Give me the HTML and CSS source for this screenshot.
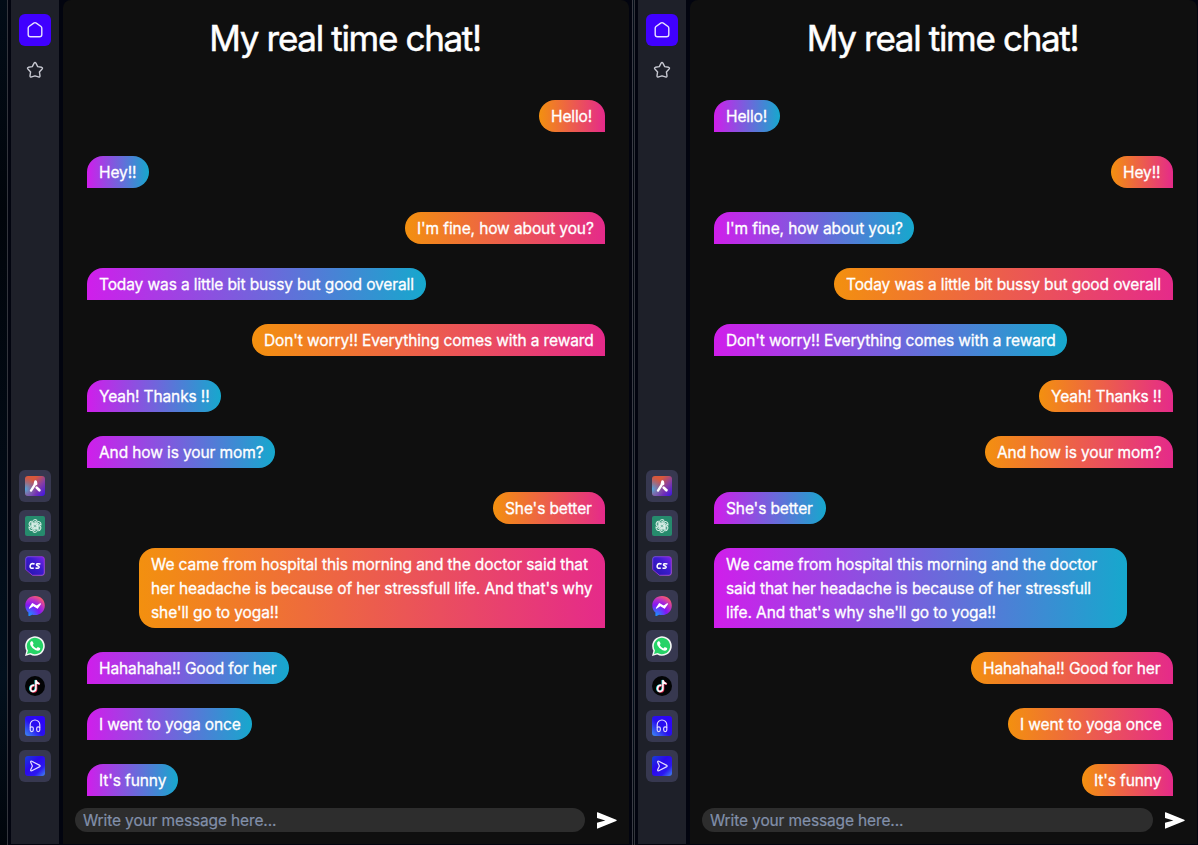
FILE: index.html
```html
<!DOCTYPE html>
<html lang="en">
<head>
<meta charset="utf-8">
<title>My real time chat!</title>
<link rel="stylesheet" href="styles.css">
</head>
<body>
<svg class="defs" width="0" height="0" aria-hidden="true">
  <defs>
    <linearGradient id="ariaBase" x1="0" y1="0" x2="1" y2="1"><stop offset="0" stop-color="#d8583c"/><stop offset=".3" stop-color="#d8583c"/><stop offset=".6" stop-color="#8a40a0"/><stop offset="1" stop-color="#3a12e8"/></linearGradient>
    <radialGradient id="ariaBlue" cx="0" cy=".65" r=".6"><stop offset="0" stop-color="#4fa8e0"/><stop offset="1" stop-color="#5b70c8" stop-opacity="0"/></radialGradient>
    <linearGradient id="csFill" x1="0" y1="1" x2="1" y2="0"><stop offset="0" stop-color="#2416a8"/><stop offset=".6" stop-color="#3d1bd0"/><stop offset="1" stop-color="#7b25e8"/></linearGradient>
    <linearGradient id="csEdge" x1="0" y1="0" x2="1" y2="1"><stop offset="0" stop-color="#7a55f5"/><stop offset=".5" stop-color="#a32de8"/><stop offset="1" stop-color="#c060e0"/></linearGradient>
    <radialGradient id="msg" cx=".2" cy="1" r="1.1"><stop offset="0" stop-color="#149bff"/><stop offset=".5" stop-color="#8316f5"/><stop offset=".72" stop-color="#b12bd0"/><stop offset="1" stop-color="#ff5c68"/></radialGradient>
    <linearGradient id="musicFill" x1="0" y1="1" x2="1" y2="0"><stop offset="0" stop-color="#3e8df0"/><stop offset=".45" stop-color="#2810ee"/><stop offset="1" stop-color="#3000ff"/></linearGradient>
    <linearGradient id="playFill" x1="0" y1="0" x2="1" y2="1"><stop offset="0" stop-color="#1740d8"/><stop offset=".4" stop-color="#2b08ed"/><stop offset=".72" stop-color="#2b18ef"/><stop offset="1" stop-color="#438af0"/></linearGradient>
  </defs>
  <symbol id="home" viewBox="0 0 20 20"><path d="M3.2 8.3Q3.2 7.2 4 6.5L8.7 3.1Q10 2.2 11.3 3.1L16 6.5Q16.8 7.2 16.8 8.3V14.5Q16.8 16.8 14.5 16.8H5.5Q3.2 16.8 3.2 14.5Z" fill="none" stroke="#e8e2ff" stroke-width="1.4"/></symbol>
  <symbol id="star" viewBox="0 0 20 20"><path d="M9.1 3.2Q10 1.8 10.9 3.2L12.7 6.6L16.6 7.3Q18.1 7.8 17.1 9L14.4 11.9L15 15.9Q14.9 17.6 13.4 16.9L10 15.8L6.6 16.9Q5.1 17.6 5 15.9L5.6 11.9L2.9 9Q1.9 7.8 3.4 7.3L7.3 6.6Z" fill="none" stroke="#c6c7d0" stroke-width="1.4" stroke-linejoin="round"/></symbol>
  <symbol id="aria" viewBox="0 0 20 20"><rect width="20" height="20" rx="3" fill="url(#ariaBase)"/><rect width="20" height="20" rx="3" fill="url(#ariaBlue)"/><path d="M10.4 5.5L9.5 9.2L6 14.6M10.9 5.8L11.2 8" fill="none" stroke="#fff" stroke-width="2.4" stroke-linecap="round"/><path d="M11.7 11.6L14.4 14.3" stroke="#fff" stroke-width="2.7" stroke-linecap="round"/></symbol>
  <symbol id="gpt" viewBox="0 0 20 20"><rect width="20" height="20" rx="2" fill="#268b6d"/><g fill="none" stroke="#d8eee7" stroke-width="1"><path id="petal" d="M7.5 11.4V6.2Q7.6 3.7 10 3.6Q11.4 3.6 12.2 4.4L8.7 6.4V10.8"/><use href="#petal" transform="rotate(60 10 10)"/><use href="#petal" transform="rotate(120 10 10)"/><use href="#petal" transform="rotate(180 10 10)"/><use href="#petal" transform="rotate(240 10 10)"/><use href="#petal" transform="rotate(300 10 10)"/></g></symbol>
  <symbol id="cs" viewBox="0 0 20 20"><path d="M3 .7H17Q19.3.7 19.3 3V17Q19.3 19.3 17 19.3H7.5L.7 13.5V3Q.7.7 3 .7Z" fill="url(#csFill)" stroke="url(#csEdge)" stroke-width=".8"/><path d="M9.6 8.1Q6 6.6 5.2 9.6Q4.5 12.9 8.7 12.1M15.4 8Q11.5 7.2 11.5 8.8C11.5 10 14.4 9.6 14.1 11.2Q13.6 12.7 10.5 12" fill="none" stroke="#fff" stroke-width="1.6"/></symbol>
  <symbol id="messenger" viewBox="0 0 20 20"><path d="M10 0C4.2 0 .3 4.2.3 9.5C.3 12.5 1.5 15 3.4 16.5V19.4Q3.6 20.2 4.4 19.9L7.2 18.8Q8.5 19.1 10 19.1C15.8 19.1 19.8 14.9 19.8 9.5S15.8 0 10 0Z" fill="url(#msg)"/><path d="M4.5 12.1L7.5 7.7L11.7 10.3L15.4 7.8L12.4 12.1L8.3 9.6Z" fill="#fff" stroke="#fff" stroke-width="1.2" stroke-linejoin="round"/></symbol>
  <symbol id="whatsapp" viewBox="0 0 20 20"><path d="M0 20L1.4 14.8A9.8 9.8 0 1 1 5.2 18.6Z" fill="#f4f5f5"/><path d="M2 18L3 14.4A8.2 8.2 0 1 1 5.6 17Z" fill="#25d366"/><path d="M6.2 5.3Q7.4 4.8 7.8 5.8L8.5 7.4Q8.7 8 7.7 9Q8.9 11.5 11.4 12.4L12.4 11.3Q12.8 11 13.3 11.3L15 12.1Q15.5 12.5 14.9 13.7Q13.6 15.4 10.7 14.2Q7 12.7 5.3 9Q4.4 6.6 6.2 5.3Z" fill="#fff"/></symbol>
  <symbol id="tiktok" viewBox="0 0 20 20"><circle cx="10" cy="10" r="10" fill="#030405"/><g fill="none" stroke-width="1.9"><path d="M9 9.1C3.8 8.8 3.9 15.5 7.7 15.2Q10.4 15 10.4 12.4V4Q10.8 7 14 7.5" stroke="#35dfe0"/><path d="M9.9 9.6C4.9 9.2 5 16 8.7 15.8Q11.4 15.7 11.4 12.9V4.6Q11.8 7.4 15 8.2" stroke="#ed2c55"/><path d="M9.4 9.3C4.4 9 4.5 15.6 8.2 15.4Q10.9 15.2 10.9 12.6V4.2Q11.3 7.2 14.5 7.8" stroke="#fff" stroke-width="1.5"/></g></symbol>
  <symbol id="music" viewBox="0 0 20 20"><rect width="20" height="20" rx="3" fill="url(#musicFill)"/><g fill="none" stroke="#e4dcff" stroke-width="1.15"><path d="M5.2 12V8.8A4.8 4.8 0 0 1 14.8 8.8V12"/><rect x="5.2" y="10.8" width="3.1" height="4.8" rx="1.5"/><rect x="11.7" y="10.8" width="3.1" height="4.8" rx="1.5"/></g></symbol>
  <symbol id="player" viewBox="0 0 20 20"><rect width="20" height="20" rx="3" fill="url(#playFill)"/><path d="M5.6 6.1Q5.6 4.9 6.8 5.3L14.8 9.4Q15.7 10 14.8 10.6L6.8 14.7Q5.6 15.1 5.6 13.9L7.4 10Z" fill="none" stroke="#e4dcff" stroke-width="1.2" stroke-linejoin="round"/></symbol>
  <symbol id="send" viewBox="0 0 20 17"><path d="M0 .7Q0 0 .7.2L19.2 7.8Q20.2 8.4 19.2 9L.7 16.6Q0 16.8 0 16.1V10.7L8.4 8.4L0 6.1Z" fill="#fff"/></symbol>
</svg>
<main class="desktop">
  <section class="window window-first">
    <nav class="sidebar">
      <span class="tab active"><svg><use href="#home"/></svg></span>
      <span class="tab"><svg><use href="#star"/></svg></span>
      <div class="apps">
        <span class="tab app"><svg><use href="#aria"/></svg></span>
        <span class="tab app"><svg><use href="#gpt"/></svg></span>
        <span class="tab app"><svg><use href="#cs"/></svg></span>
        <span class="tab app"><svg><use href="#messenger"/></svg></span>
        <span class="tab app"><svg><use href="#whatsapp"/></svg></span>
        <span class="tab app"><svg><use href="#tiktok"/></svg></span>
        <span class="tab app"><svg><use href="#music"/></svg></span>
        <span class="tab app"><svg><use href="#player"/></svg></span>
      </div>
    </nav>
    <div class="page">
      <h1>My real time chat!</h1>
      <ul class="messages">
        <li class="mine m-hello">Hello!</li>
        <li class="m-hey">Hey!!</li>
        <li class="mine m-fine">I'm fine, how about you?</li>
        <li class="m-today">Today was a little bit bussy but good overall</li>
        <li class="mine m-worry">Don't worry!! Everything comes with a reward</li>
        <li class="m-thanks">Yeah! Thanks !!</li>
        <li class="m-mom">And how is your mom?</li>
        <li class="mine m-better">She's better</li>
        <li class="mine m-long">We came from hospital this morning and the doctor said that<br>her headache is because of her stressfull life. And that's why<br>she'll go to yoga!!</li>
        <li class="m-haha">Hahahaha!! Good for her</li>
        <li class="m-yoga">I went to yoga once</li>
        <li class="m-funny">It's funny</li>
      </ul>
      <form class="composer"><input placeholder="Write your message here..."><svg class="send"><use href="#send"/></svg></form>
    </div>
  </section>
  <section class="window window-second">
    <nav class="sidebar">
      <span class="tab active"><svg><use href="#home"/></svg></span>
      <span class="tab"><svg><use href="#star"/></svg></span>
      <div class="apps">
        <span class="tab app"><svg><use href="#aria"/></svg></span>
        <span class="tab app"><svg><use href="#gpt"/></svg></span>
        <span class="tab app"><svg><use href="#cs"/></svg></span>
        <span class="tab app"><svg><use href="#messenger"/></svg></span>
        <span class="tab app"><svg><use href="#whatsapp"/></svg></span>
        <span class="tab app"><svg><use href="#tiktok"/></svg></span>
        <span class="tab app"><svg><use href="#music"/></svg></span>
        <span class="tab app"><svg><use href="#player"/></svg></span>
      </div>
    </nav>
    <div class="page">
      <h1>My real time chat!</h1>
      <ul class="messages">
        <li class="m-hello">Hello!</li>
        <li class="mine m-hey">Hey!!</li>
        <li class="m-fine">I'm fine, how about you?</li>
        <li class="mine m-today">Today was a little bit bussy but good overall</li>
        <li class="m-worry">Don't worry!! Everything comes with a reward</li>
        <li class="mine m-thanks">Yeah! Thanks !!</li>
        <li class="mine m-mom">And how is your mom?</li>
        <li class="m-better">She's better</li>
        <li class="m-long m-narrow">We came from hospital this morning and the doctor<br>said that her headache is because of her stressfull<br>life. And that's why she'll go to yoga!!</li>
        <li class="mine m-haha">Hahahaha!! Good for her</li>
        <li class="mine m-yoga">I went to yoga once</li>
        <li class="mine m-funny">It's funny</li>
      </ul>
      <form class="composer"><input placeholder="Write your message here..."><svg class="send"><use href="#send"/></svg></form>
    </div>
  </section>
</main>
</body>
</html>
```

FILE: styles.css
```css
* { box-sizing: border-box; }
body { margin: 0; background: #02050e; color: #fff; font: 400 15.5px/24px Inter, "Liberation Sans", sans-serif; overflow: hidden; }
.defs { position: absolute; }
.desktop { display: flex; height: 845px; padding-left: 7px; background: linear-gradient(#020c17, #01050b 25%, #020b16 60%, #02101d 80%, #01050b); }
.window { display: flex; gap: 4px; background: #02040f; padding-bottom: 1px; }
.window-first { width: 626px; border-left: 1px solid #33353d; border-right: 1px solid #3a3b45; padding-left: 3px; padding-right: 3px; }
.window-second { flex: 1; margin-left: 1px; border-left: 1px solid #33353d; padding-left: 3px; padding-right: 1px; }
.sidebar { flex: 0 0 48px; display: flex; flex-direction: column; align-items: center; gap: 8px; padding: 14px 0 62px; background: #1e2029; }
.apps { display: flex; flex-direction: column; gap: 8px; margin-top: auto; }
.tab { width: 32px; height: 32px; display: flex; align-items: center; justify-content: center; border-radius: 6px; }
.tab svg { width: 20px; height: 20px; }
.active { background: #4000ff; }
.app { background: #373850; }
.page { flex: 1; min-width: 0; display: flex; flex-direction: column; padding: 18px 12px 12px; background: #0f0f0f; border-radius: 8px 8px 0 0; }
h1 { margin: 0 0 42px; padding-right: 2px; font-size: 35px; line-height: 41px; height: 40px; font-weight: 400; text-align: center; letter-spacing: -1.33px; -webkit-text-stroke: .5px #fff; }
.messages { list-style: none; margin: 0; padding: 0 12px; display: flex; flex-direction: column; align-items: flex-start; gap: 24px; }
.messages li { padding: 5px 0 3px 12px; border-radius: 16px 16px 16px 0; background: linear-gradient(to right, #d01eeb, #16a8cd); white-space: nowrap; letter-spacing: -.11px; -webkit-text-stroke: .3px #fff; }
.messages .mine { align-self: flex-end; border-radius: 16px 16px 0 16px; background: linear-gradient(to right, #f3900f, #e52a8a); }
.m-hello { width: 66px; }
.m-hey { width: 62px; }
.m-fine { width: 200px; }
.m-today { width: 339px; }
.m-worry { width: 353px; }
.m-thanks { width: 134px; }
.m-mom { width: 188px; }
.m-better { width: 112px; }
.m-long { width: 466px; }
.messages .m-long { letter-spacing: -.09px; }
.m-narrow { width: 413px; }
.m-haha { width: 202px; }
.m-yoga { width: 165px; }
.m-funny { width: 91px; }
.composer { display: flex; align-items: center; gap: 12px; margin-top: auto; }
.composer input { flex: 1; min-width: 0; height: 24px; border: 0; border-radius: 12px; padding: 2px 8px 0; background: #2d2d2d; font: inherit; letter-spacing: -.13px; color: #fff; }
.composer input::placeholder { color: #8290aa; opacity: 1; -webkit-text-stroke: .2px #8290aa; }
.send { width: 20px; height: 17px; }
```
